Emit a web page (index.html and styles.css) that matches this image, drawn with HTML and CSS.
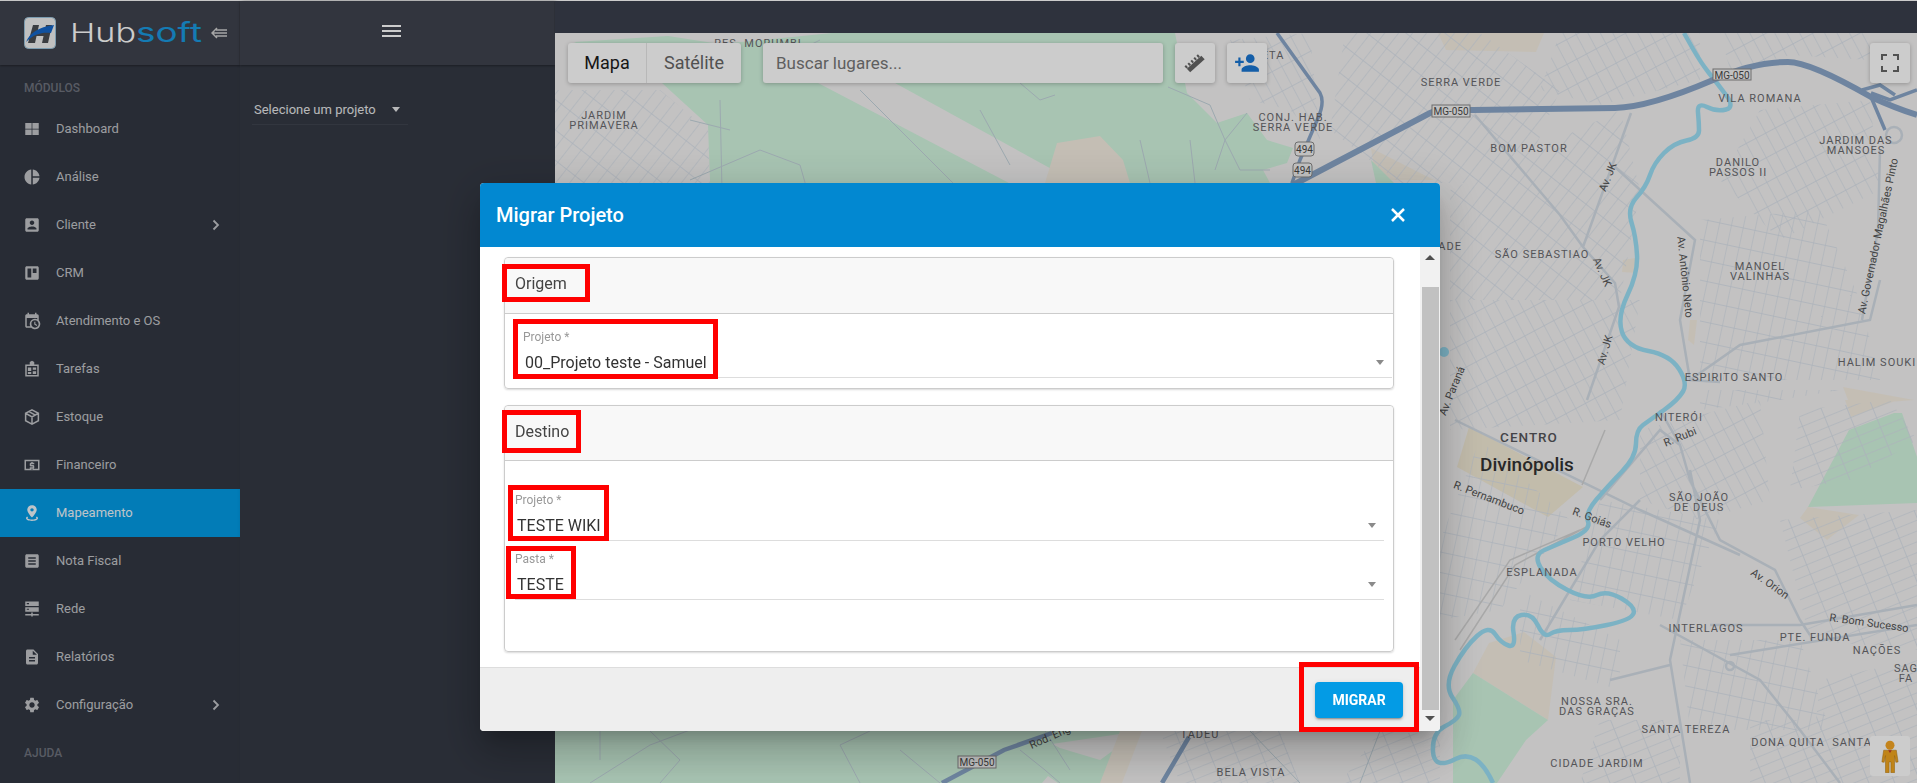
FILE: index.html
```html
<!DOCTYPE html>
<html lang="pt-BR">
<head>
  <meta charset="UTF-8">
  <title>Hubsoft - Mapeamento</title>
  <link rel="stylesheet" href="styles.css">
</head>
<body>
  <div class="app">
    <aside class="sidebar">
      <div class="brand">
        <svg class="brand-mark" viewBox="0 0 32 32">
          <rect x=".5" y=".5" width="31" height="31" rx="4" fill="#f0f0f0" stroke="#9cc4dc"/>
          <path d="M9 8h6l-4 18H4zM22 8h6l-4 18h-6zM11 14h13l-1 5H10z" fill="#4a4d52"/>
          <path d="M2 25C6 16 14 10 30 8l-3 8c-9-1-17 1-25 9z" fill="#1466c8"/>
        </svg>
        <svg class="brand-name" viewBox="0 0 134 32">
          <text class="brand-hub" x="0" y="25" textLength="66" lengthAdjust="spacingAndGlyphs">Hub</text>
          <text class="brand-soft" x="66" y="25" textLength="66" lengthAdjust="spacingAndGlyphs">soft</text>
        </svg>
        <svg class="brand-fold" viewBox="0 0 16 12">
          <path d="M6 1 1 6l5 5M2 6h14M5 3h11M5 9h11" fill="none" stroke="#d0d0d0" stroke-width="1.5"/>
        </svg>
      </div>
      <div class="nav-title">Módulos</div>
      <ul class="nav">
        <li class="nav-item">
          <svg class="nav-icon" viewBox="0 0 24 24"><path d="M3 4h8.500v7.500H3zM12.500 4H21v7.500h-8.500zM3 12.500h8.500V20H3zM12.500 12.500H21V20h-8.500z"/></svg>
          Dashboard
        </li>
        <li class="nav-item">
          <svg class="nav-icon" viewBox="0 0 24 24"><path d="M11 2v20c-5.070-.5-9-4.790-9-10s3.930-9.500 9-10zm2.030 0v8.990H22c-.47-4.740-4.240-8.520-8.970-8.990zm0 11.010V22c4.740-.47 8.500-4.250 8.970-8.990h-8.970z"/></svg>
          Análise
        </li>
        <li class="nav-item">
          <svg class="nav-icon" viewBox="0 0 24 24"><path d="M3 5v14c0 1.100.89 2 2 2h14c1.100 0 2-.9 2-2V5c0-1.100-.9-2-2-2H5c-1.110 0-2 .9-2 2zm12 4c0 1.660-1.340 3-3 3s-3-1.340-3-3 1.340-3 3-3 3 1.340 3 3zm-9 8c0-2 4-3.100 6-3.100s6 1.100 6 3.100v1H6v-1z"/></svg>
          Cliente
          <svg class="nav-arrow" viewBox="0 0 8 12"><path d="M1.500 1.500 6 6l-4.500 4.500" fill="none" stroke-width="1.800"/></svg>
        </li>
        <li class="nav-item">
          <svg class="nav-icon" viewBox="0 0 24 24"><path fill-rule="evenodd" d="M19 3H5c-1.100 0-2 .9-2 2v14c0 1.100.9 2 2 2h14c1.100 0 2-.9 2-2V5c0-1.100-.9-2-2-2zm-8 15H6V6h5v12zm7-6h-5V6h5v6z"/></svg>
          CRM
        </li>
        <li class="nav-item">
          <svg class="nav-icon" viewBox="0 0 24 24"><path d="M15 13h1.500v2.820l2.440 1.410-.75 1.300L15 16.690V13m4-5H5v11h4.670A7 7 0 0 1 16 9c1.070 0 2.090.24 3 .67V8M5 21c-1.110 0-2-.9-2-2V5c0-1.110.89-2 2-2h1V1h2v2h8V1h2v2h1a2 2 0 0 1 2 2v6.100A7 7 0 0 1 16 23c-1.910 0-3.640-.76-4.900-2H5m11-9.850A4.850 4.850 0 0 0 11.150 16c0 2.680 2.170 4.850 4.850 4.850s4.850-2.170 4.850-4.850-2.170-4.850-4.850-4.850z"/></svg>
          Atendimento e OS
        </li>
        <li class="nav-item">
          <svg class="nav-icon" viewBox="0 0 24 24"><path fill-rule="evenodd" d="M9 6V2.500L12 1l3 1.500V6h6v16H3V6zM5 8v12h14V8zm1.500 2H11v4.500H6.500zM13 10h4.500v3H13zm-6.500 6H11v2.500H6.500zM13 15h4.500v3.500H13z"/></svg>
          Tarefas
        </li>
        <li class="nav-item">
          <svg class="nav-icon" viewBox="0 0 24 24"><path d="M12 2.500 20.500 7v10L12 21.500 3.500 17V7zM3.500 7l8.500 5 8.500-5M12 12v9.500M8 4.800l8.500 4.800" fill="none" stroke-width="2"/></svg>
          Estoque
        </li>
        <li class="nav-item">
          <svg class="nav-icon" viewBox="0 0 24 24"><path fill-rule="evenodd" d="M2 5h20v14H2zm2 2v10h16V7zm7 1h2v1h2v2h-4v1h3l1 1v3l-1 1h-1v1h-2v-1H9v-2h4v-1h-3l-1-1v-3l1-1h1z"/></svg>
          Financeiro
        </li>
        <li class="nav-item is-active">
          <svg class="nav-icon" viewBox="0 0 24 24"><path fill-rule="evenodd" d="M12 1.500c-3.600 0-6.300 2.700-6.300 6.200 0 4.300 6.300 10.300 6.300 10.300s6.300-6 6.300-10.300c0-3.500-2.700-6.200-6.300-6.200zm0 4a2.300 2.300 0 1 1 0 4.600 2.300 2.300 0 0 1 0-4.600z"/><path d="M5.500 16.500c-1 .7-1.500 1.500-1.500 2.500 0 2 3.500 3.500 8 3.500s8-1.500 8-3.500c0-1-.5-1.800-1.500-2.500l-1.300 1.400c.5.300.8.700.8 1.100 0 .8-2.500 1.700-6 1.700s-6-.9-6-1.700c0-.4.300-.8.800-1.100z"/></svg>
          Mapeamento
        </li>
        <li class="nav-item">
          <svg class="nav-icon" viewBox="0 0 24 24"><path d="M19 3H5c-1.100 0-2 .9-2 2v14c0 1.100.9 2 2 2h14c1.100 0 2-.9 2-2V5c0-1.100-.9-2-2-2zm-2 14H7v-2h10v2zm0-4H7v-2h10v2zm0-4H7V7h10v2z"/></svg>
          Nota Fiscal
        </li>
        <li class="nav-item">
          <svg class="nav-icon" viewBox="0 0 24 24"><path fill-rule="evenodd" d="M3 2h18v6H3zm2 2v1.500h3V4zM3 9.500h18v6H3zm2 2V13h3v-1.500zM11 16.500h2v2h8v2h-8V22h-2v-1.500H3v-2h8z"/></svg>
          Rede
        </li>
        <li class="nav-item">
          <svg class="nav-icon" viewBox="0 0 24 24"><path d="M14 2H6c-1.100 0-1.990.9-1.990 2L4 20c0 1.100.89 2 1.990 2H18c1.100 0 2-.9 2-2V8l-6-6zm2 16H8v-2h8v2zm0-4H8v-2h8v2zm-3-5V3.500L18.500 9H13z"/></svg>
          Relatórios
        </li>
        <li class="nav-item">
          <svg class="nav-icon" viewBox="0 0 24 24"><path d="M19.140 12.940c.04-.3.06-.61.06-.94 0-.32-.02-.64-.07-.94l2.030-1.580a.49.49 0 0 0 .12-.61l-1.920-3.320a.488.488 0 0 0-.59-.22l-2.390.96c-.5-.38-1.030-.7-1.620-.94l-.36-2.540a.484.484 0 0 0-.48-.41h-3.840c-.24 0-.43.17-.47.41l-.36 2.540c-.59.24-1.130.57-1.620.94l-2.390-.96c-.22-.08-.47 0-.59.22L2.740 8.870c-.12.21-.08.47.12.61l2.030 1.580c-.05.3-.09.63-.09.94s.02.64.07.94l-2.030 1.580a.49.49 0 0 0-.12.61l1.920 3.320c.12.22.37.29.59.22l2.390-.96c.5.38 1.030.7 1.620.94l.36 2.540c.05.24.24.41.48.41h3.840c.24 0 .44-.17.47-.41l.36-2.540c.59-.24 1.130-.56 1.620-.94l2.390.96c.22.08.47 0 .59-.22l1.920-3.320c.12-.22.07-.47-.12-.61l-2.010-1.580zM12 15.600c-1.980 0-3.600-1.620-3.600-3.600s1.620-3.600 3.600-3.600 3.600 1.620 3.600 3.600-1.620 3.600-3.600 3.600z"/></svg>
          Configuração
          <svg class="nav-arrow" viewBox="0 0 8 12"><path d="M1.500 1.500 6 6l-4.500 4.500" fill="none" stroke-width="1.800"/></svg>
        </li>
      </ul>
      <div class="nav-title nav-title-help">Ajuda</div>
    </aside>

    <section class="panel">
      <div class="panel-head">
        <span class="burger"></span>
      </div>
      <div class="project-select">
        <span>Selecione um projeto</span>
        <span class="caret caret-light"></span>
      </div>
    </section>

    <main class="main">
      <div class="topbar"></div>
      <div class="map">
        <svg class="map-canvas" viewBox="555 33 1362 750">
          <defs>
            <pattern id="gridA" width="11" height="24" patternUnits="userSpaceOnUse" patternTransform="rotate(38)"><path class="st" d="M0 0H11M0 0V24"/></pattern>
            <pattern id="gridB" width="11" height="22" patternUnits="userSpaceOnUse" patternTransform="rotate(-28)"><path class="st" d="M0 0H11M0 0V22"/></pattern>
            <pattern id="gridC" width="12" height="20" patternUnits="userSpaceOnUse" patternTransform="rotate(12)"><path class="st" d="M0 0H12M0 0V20"/></pattern>
            <pattern id="gridD" width="10" height="24" patternUnits="userSpaceOnUse" patternTransform="rotate(68)"><path class="st" d="M0 0H10M0 0V24"/></pattern>
          </defs>

          <rect x="555" y="33" width="1362" height="750" class="land"/>

          <!-- parques e areas -->
          <path class="park" d="M574 42 668 36 720 44 832 33H1175L1187 93 1217 123 1247 113 1267 140 1293 148 1287 163 1263 170 1270 183 1320 200V731H1125L1105 783H555V731L710 700V180L708 125 662 83z"/>
          <path class="land" d="M818 83H895L1077 183H1009zM1052 744 1140 731 1100 760 1060 748zM1042 783 1048 776 1058 783z"/>
          <path class="tan" d="M1057 143 1100 136 1123 160 1130 183H1045zM1438 33H1544L1536 52 1446 50zM1371 148 1434 180H1390L1375 175zM1623 260 1635 258 1637 273 1622 272zM1843 387 1914 400 1850 405zM1845 400H1898L1851 417zM1808 507 1800 518 1827 540 1859 515zM1489 643 1524 632 1556 657 1548 720 1473 673zM1120 731H1142L1122 783H1100zM1690 320H1697L1694 345 1688 340z"/>
          <path class="park" d="M1849 430 1894 413H1902L1917 457V503L1808 507zM1473 673 1548 720 1526 740 1497 783H1453V700zM1371 160 1394 183H1376z"/>
          <path class="town" d="M1469 427 1583 487 1548 517 1457 467z"/>

          <!-- ruas -->
          <path fill="url(#gridA)" d="M555 90H660L708 130 710 183H555zM1345 33H1480L1560 90 1520 183H1400L1330 130zM1450 190 1620 110 1640 190 1620 300H1450z"/>
          <path fill="url(#gridB)" d="M1230 40 1310 33 1320 140 1290 110 1250 100zM1560 33H1700V80L1600 105 1540 90zM1760 110 1870 100 1880 190 1780 240 1720 180zM1450 300H1640L1620 420 1450 430zM1640 430 1760 400 1770 500 1700 520 1640 500zM1720 33H1870V60L1790 55 1730 70z"/>
          <path fill="url(#gridC)" d="M1700 220 1820 210 1860 300 1880 380H1700zM1600 500 1720 520 1680 620 1570 600zM1520 590 1620 640V690L1520 660zM1680 640H1800L1830 730H1690zM1440 540 1480 440 1570 520 1500 610 1440 620zM1700 390H1840L1780 400 1700 410z"/>
          <path fill="url(#gridD)" d="M1800 410 1890 400 1917 440 1850 480 1790 490zM1780 520 1917 510V650L1810 640zM1820 680 1917 660V783H1810zM1440 735V783H1340L1380 731zM1160 731H1280L1300 783H1180zM1600 720H1680V783H1580zM1750 720H1860V783H1750z"/>

          <!-- corregos no parque -->
          <path class="creek" d="M690 120 730 130M720 100 722 190M820 40 780 60M690 180 760 150 800 165 810 200M860 90 960 190M980 110 1010 165M1020 83 1040 100 1055 95M1168 87 1210 105 1225 140 1240 170 1270 170M1247 113 1225 140M1225 140 1215 170M1190 140 1195 183M1140 140 1150 183"/>
          <path class="creek" d="M590 783 650 745 690 730M600 731V760M650 731 680 760 660 783M870 731 840 745 860 783M900 750 940 783M1045 731 1070 770M1020 750 1045 770 1060 783M1250 731 1300 783M1380 731 1360 783"/>

          <!-- avenidas -->
          <path class="avenue" d="M1631 113 1583 247 1615 283 1619 307 1587 400M1615 167 1695 240 1680 320 1690 380 1720 382M1475 115 1560 215 1583 247M1690 380 1740 345 1870 320 1880 280M1455 420 1640 510 1740 555M1660 410 1680 445 1690 480 1720 540 1775 570 1800 620 1810 635M1710 625 1800 625 1917 605M1730 655 1917 625M1690 470 1700 520 1670 660 1690 783M1660 625 1760 680 1800 730 1840 783M1600 500 1660 430 1680 445M1880 150 1878 230 1862 320M1540 640 1600 540 1640 500M1610 680 1670 665"/>
          <path class="rail" d="M1455 640 1510 560 1580 530M1460 650 1515 565 1590 525M1582 485 1605 430"/>
          <path class="avenue-dark" d="M1162 783 1189 737M942 783 1004 750 1052 733"/>

          <!-- rio -->
          <path class="river" d="M1684 33L1692.500 48Q1701 63 1709 73Q1717 83 1726 95Q1735 107 1726 109.500Q1717 112 1707 107Q1697 102 1698 112.500Q1699 123 1699 130.500Q1699 138 1686.500 140.500Q1674 143 1664 153Q1654 163 1650 175Q1646 187 1636.500 197.500Q1627 208 1631.500 222.500Q1636 237 1637 255Q1638 273 1627.500 295Q1617 317 1622 332Q1627 347 1648.500 351Q1670 355 1679 369Q1688 383 1683 391.500Q1678 400 1664 410Q1650 420 1643 425Q1636 430 1636 443.500Q1636 457 1621.500 472Q1607 487 1596 500Q1585 513 1588 521.500Q1591 530 1573.500 537.500Q1556 545 1544.500 550Q1533 555 1540.500 567.500Q1548 580 1567.500 590Q1587 600 1597 595Q1607 590 1621.500 598.500Q1636 607 1633.500 613.500Q1631 620 1607 625Q1583 630 1569.500 630Q1556 630 1550 634Q1544 638 1538 625.500Q1532 613 1521.500 615Q1511 617 1513.500 632.500Q1516 648 1508.500 645.500Q1501 643 1495 634Q1489 625 1477 636Q1465 647 1454.500 666Q1444 685 1452.500 697.500Q1461 710 1459 715Q1457 720 1444.500 726.500Q1432 733 1433 751.500Q1434 770 1455.500 759Q1477 748 1493 783"/>
          <circle class="lake" cx="1444" cy="352" r="5"/>

          <!-- rodovias -->
          <path class="highway" d="M1270 197 1430 113Q1440 109 1473 110L1615 108Q1650 107 1713 80Q1753 62 1788 62Q1810 62 1871 97Q1895 108 1917 115"/>
          <path class="highway-thin" d="M1277 33 1320 93Q1325 102 1318 118L1300 160 1292 183M1871 93 1890 100 1917 90M1862 90 1880 85 1895 95M1871 97 1885 130"/>
          <circle class="ring" cx="1894" cy="135" r="8"/>
          <circle class="ring" cx="1730" cy="666" r="4"/>

          <!-- escudos -->
          <g class="shield"><rect x="1432" y="105" width="38" height="12"/><text x="1451" y="111.500">MG-050</text></g>
          <g class="shield"><rect x="1713" y="69" width="38" height="11"/><text x="1732" y="75">MG-050</text></g>
          <g class="shield"><rect x="958" y="756" width="38" height="12"/><text x="977" y="762.500">MG-050</text></g>
          <g class="shield"><rect x="1295" y="142" width="19" height="14" rx="3"/><text x="1304.500" y="149.500">494</text></g>
          <g class="shield"><rect x="1293" y="163" width="19" height="14" rx="3"/><text x="1302.500" y="170.500">494</text></g>

          <!-- bairros -->
          <g class="place">
            <text x="758" y="43">RES. MORUMBI</text>
            <text x="604" y="115">JARDIM</text>
            <text x="604" y="125">PRIMAVERA</text>
            <text x="1273" y="55">ETA</text>
            <text x="1293" y="117">CONJ. HAB.</text>
            <text x="1293" y="127">SERRA VERDE</text>
            <text x="1461" y="82">SERRA VERDE</text>
            <text x="1760" y="98">VILA ROMANA</text>
            <text x="1529" y="148">BOM PASTOR</text>
            <text x="1856" y="140">JARDIM DAS</text>
            <text x="1856" y="150">MANSOES</text>
            <text x="1738" y="162">DANILO</text>
            <text x="1738" y="172">PASSOS II</text>
            <text x="1760" y="266">MANOEL</text>
            <text x="1760" y="276">VALINHAS</text>
            <text x="1542" y="254">SÃO SEBASTIAO</text>
            <text x="1440" y="246">CIDADE</text>
            <text x="1734" y="377">ESPIRITO SANTO</text>
            <text x="1877" y="362">HALIM SOUKI</text>
            <text x="1679" y="417">NITERÓI</text>
            <text x="1699" y="497">SÃO JOÃO</text>
            <text x="1699" y="507">DE DEUS</text>
            <text x="1624" y="542">PORTO VELHO</text>
            <text x="1542" y="572">ESPLANADA</text>
            <text x="1706" y="628">INTERLAGOS</text>
            <text x="1815" y="637">PTE. FUNDA</text>
            <text x="1877" y="650">NAÇÕES</text>
            <text x="1906" y="668">SAG</text>
            <text x="1906" y="678">FA</text>
            <text x="1597" y="701">NOSSA SRA.</text>
            <text x="1597" y="711">DAS GRAÇAS</text>
            <text x="1686" y="729">SANTA TEREZA</text>
            <text x="1788" y="742">DONA QUITA</text>
            <text x="1852" y="742">SANTA</text>
            <text x="1597" y="763">CIDADE JARDIM</text>
            <text x="1200" y="734">TADEU</text>
            <text x="1251" y="772">BELA VISTA</text>
          </g>
          <text class="place-big" x="1529" y="437">CENTRO</text>
          <text class="city" x="1527" y="464">Divinópolis</text>

          <!-- nomes de rua -->
          <g class="street-name">
            <text x="1608" y="177" transform="rotate(-68 1608 177)">Av. JK</text>
            <text x="1602" y="272" transform="rotate(66 1602 272)">Av. JK</text>
            <text x="1605" y="350" transform="rotate(-74 1605 350)">Av. JK</text>
            <text x="1878" y="236" transform="rotate(-78 1878 236)">Av. Governador Magalhães Pinto</text>
            <text x="1685" y="277" transform="rotate(84 1685 277)">Av. Antônio Neto</text>
            <text x="1452" y="391" transform="rotate(-68 1452 391)">Av. Paraná</text>
            <text x="1680" y="437" transform="rotate(-22 1680 437)">R. Rubi</text>
            <text x="1489" y="498" transform="rotate(21 1489 498)">R. Pernambuco</text>
            <text x="1592" y="518" transform="rotate(20 1592 518)">R. Goiás</text>
            <text x="1770" y="584" transform="rotate(35 1770 584)">Av. Orion</text>
            <text x="1869" y="623" transform="rotate(8 1869 623)">R. Bom Sucesso</text>
            <text x="1050" y="737" transform="rotate(-24 1050 737)">Rod. Eng</text>
          </g>
        </svg>

        <div class="map-tools">
          <div class="map-type">
            <span class="map-type-on">Mapa</span>
            <span class="map-type-off">Satélite</span>
          </div>
          <div class="map-search">Buscar lugares...</div>
          <button class="map-btn">
            <svg class="ruler" viewBox="0 0 24 24">
              <path d="M5.500 19.500 20 6.500" fill="none" stroke="#666" stroke-width="5"/>
              <path d="M2.500 16.500 17 3.500" fill="none" stroke="#666" stroke-width="3" stroke-dasharray="2 2"/>
            </svg>
          </button>
          <button class="map-btn">
            <svg class="person-add" viewBox="0 0 24 24"><path d="M15 12c2.210 0 4-1.790 4-4s-1.790-4-4-4-4 1.790-4 4 1.790 4 4 4zm-9-2V7H4v3H1v2h3v3h2v-3h3v-2H6zm9 4c-2.670 0-8 1.340-8 4v2h16v-2c0-2.660-5.330-4-8-4z"/></svg>
          </button>
          <button class="map-btn map-btn-end">
            <svg class="expand" viewBox="0 0 18 18"><path d="M1 6V1h5M12 1h5v5M17 12v5h-5M6 17H1v-5" fill="none" stroke="#666" stroke-width="2"/></svg>
          </button>
        </div>

        <div class="pegman">
          <svg viewBox="0 0 20 36">
            <circle cx="10" cy="5.500" r="5" fill="#f5a623"/>
            <path d="M3 11h14l2 13-2.500.5L15 17v19h-4V24H9v12H5V17l-1.500 7.500L1 24z" fill="#f0a51e" stroke="#b97a10" stroke-width=".6"/>
            <path d="M8 11l2 3 2-3z" fill="#c0392b"/>
          </svg>
        </div>
      </div>
    </main>
  </div>

  <div class="backdrop"></div>

  <div class="modal">
    <header class="modal-head">
      <h2 class="modal-title">Migrar Projeto</h2>
      <svg class="modal-close" viewBox="0 0 14 14"><path d="M1 1l12 12M13 1 1 13" fill="none" stroke="#fff" stroke-width="2.500"/></svg>
    </header>
    <div class="modal-scroll">
      <div class="modal-content">
        <form class="modal-form">
          <div class="card card-origem">
            <div class="card-head">Origem</div>
            <div class="card-body">
              <div class="field">
                <label class="field-label">Projeto *</label>
                <div class="field-value">00_Projeto teste - Samuel</div>
                <span class="caret"></span>
              </div>
            </div>
          </div>
          <div class="card card-destino">
            <div class="card-head">Destino</div>
            <div class="card-body">
              <div class="field">
                <label class="field-label">Projeto *</label>
                <div class="field-value">TESTE WIKI</div>
                <span class="caret"></span>
              </div>
              <div class="field">
                <label class="field-label">Pasta *</label>
                <div class="field-value">TESTE</div>
                <span class="caret"></span>
              </div>
            </div>
          </div>
        </form>
        <footer class="modal-foot">
          <button class="btn-migrar" type="button">MIGRAR</button>
        </footer>
      </div>
      <div class="scrollbar">
        <span class="scroll-up"></span>
        <span class="scroll-thumb"></span>
        <span class="scroll-down"></span>
      </div>
    </div>

    <!-- marcacoes em vermelho do print -->
    <span class="mark mark-origem"></span>
    <span class="mark mark-projeto"></span>
    <span class="mark mark-destino"></span>
    <span class="mark mark-projeto2"></span>
    <span class="mark mark-pasta"></span>
    <span class="mark mark-migrar"></span>
  </div>
</body>
</html>
```

FILE: styles.css
```css
* {
  box-sizing: border-box;
}

html,
body {
  margin: 0;
  height: 100%;
  overflow: hidden;
}

body {
  font-family: Roboto, "Liberation Sans", sans-serif;
  background-color: #fff;
}

.app {
  display: flex;
  height: 100vh;
  padding-top: 1px;
  background-color: #fff;
}

/* menu lateral */
.sidebar {
  width: 240px;
  flex-shrink: 0;
  background-color: #333843;
  color: #c3c5c9;
}

.brand {
  display: flex;
  align-items: center;
  height: 64px;
  padding-left: 24px;
  background-color: #3f434e;
  box-shadow: 0 1px 2px rgba(0, 0, 0, 0.35);
  position: relative;
}

.brand-mark {
  width: 32px;
  height: 32px;
}

.brand-name {
  width: 134px;
  height: 32px;
  margin-left: 14px;
}

.brand-hub,
.brand-soft {
  font-family: Inter, sans-serif;
  font-size: 26px;
  font-weight: 300;
}

.brand-hub {
  fill: #fff;
}

.brand-soft {
  fill: #1a9ae0;
  font-weight: 400;
}

.brand-fold {
  width: 16px;
  height: 12px;
  margin-left: 7px;
}

.nav-title {
  height: 40px;
  padding: 16px 24px 0;
  font-size: 12px;
  line-height: 14px;
  font-weight: 500;
  color: #6e727d;
  text-transform: uppercase;
}

.nav-title-help {
  height: 48px;
  padding-top: 17px;
}

.nav {
  list-style: none;
  margin: 0;
  padding: 0;
}

.nav-item {
  display: flex;
  align-items: center;
  height: 48px;
  padding-left: 23px;
  padding-bottom: 1px;
  font-size: 13px;
}

.nav-item.is-active {
  background-color: #039be5;
  color: #eef6fb;
}

.nav-icon {
  width: 18px;
  height: 18px;
  margin-right: 15px;
  fill: currentColor;
  stroke: currentColor;
  stroke-width: 0;
}

.nav-arrow {
  width: 8px;
  height: 12px;
  margin-left: auto;
  margin-right: 20px;
  stroke: currentColor;
}

/* painel de projetos */
.panel {
  width: 315px;
  flex-shrink: 0;
  background-color: #343944;
  box-shadow: 2px 0 4px rgba(0, 0, 0, 0.25);
  position: relative;
}

.panel-head {
  display: flex;
  align-items: center;
  justify-content: center;
  height: 64px;
  padding: 0 12px 5px 0;
  background-color: #3f434e;
  box-shadow: 0 1px 2px rgba(0, 0, 0, 0.35);
}

.burger {
  width: 19px;
  height: 12px;
  border-top: 2px solid #fff;
  border-bottom: 2px solid #fff;
  position: relative;
}

.burger::after {
  content: "";
  position: absolute;
  left: 0;
  right: 0;
  top: 3px;
  height: 2px;
  background-color: #fff;
}

.project-select {
  display: flex;
  align-items: center;
  justify-content: space-between;
  width: 156px;
  height: 30px;
  margin: 30px 0 0 12px;
  padding: 0 8px 0 2px;
  border-bottom: 1px solid #3f444f;
  font-size: 13px;
  color: #e6e7e9;
}

.caret {
  width: 0;
  height: 0;
  border-left: 4.5px solid transparent;
  border-right: 4.5px solid transparent;
  border-top: 5px solid #8a8a8a;
}

.caret-light {
  border-top-color: #e6e7e9;
}

/* mapa */
.main {
  flex: 1;
  display: flex;
  flex-direction: column;
  min-width: 0;
}

.topbar {
  height: 32px;
  flex-shrink: 0;
  background-color: #3a3f4d;
  box-shadow: 0 1px 1px rgba(0, 0, 0, 0.5);
  position: relative;
}

.map {
  flex: 1;
  position: relative;
  overflow: hidden;
}

.map-canvas {
  position: absolute;
  left: 0;
  top: 0;
  width: 1362px;
  height: 750px;
}

.land {
  fill: #f4f3f3;
}

.park {
  fill: #d2f5df;
}

.tan {
  fill: #f5eee2;
}

.town {
  fill: #f3ebd6;
}

.st {
  fill: none;
  stroke: #d8e0ea;
  stroke-width: 1.3;
}

.creek {
  fill: none;
  stroke: #c4d4dc;
  stroke-width: 1;
}

.avenue {
  fill: none;
  stroke: #d4dce5;
  stroke-width: 2.5;
}

.rail {
  fill: none;
  stroke: #d3d3d3;
  stroke-width: 1.5;
}

.avenue-dark,
.highway-thin {
  fill: none;
  stroke: #8aa6c8;
  stroke-width: 3.5;
}

.avenue-dark {
  stroke-width: 4.5;
}

.highway {
  fill: none;
  stroke: #8aa6c8;
  stroke-width: 6;
}

.ring {
  fill: none;
  stroke: #d4dce5;
  stroke-width: 2.5;
}

.river {
  fill: none;
  stroke: #9cdff5;
  stroke-width: 4.5;
  stroke-linejoin: round;
}

.lake {
  fill: #9cdff5;
}

.shield rect {
  fill: #f2f2f2;
  stroke: #888;
  stroke-width: 1;
}

.shield text {
  font-size: 10px;
  fill: #4a4a4a;
  text-anchor: middle;
  dominant-baseline: central;
}

.place text,
.place-big {
  font-size: 11px;
  letter-spacing: 1px;
  fill: #6a6a6e;
  text-anchor: middle;
  dominant-baseline: central;
}

.place-big {
  font-size: 13.5px;
  font-weight: 500;
  fill: #55555a;
}

.city {
  font-size: 19px;
  font-weight: 500;
  fill: #333;
  text-anchor: middle;
  dominant-baseline: central;
}

.street-name text {
  font-size: 11px;
  fill: #555;
  text-anchor: middle;
  dominant-baseline: central;
}

.map-tools {
  display: flex;
  gap: 12px;
  padding: 10px 7px 0 13px;
  position: relative;
}

.map-type,
.map-search,
.map-btn {
  height: 40px;
  background-color: #fff;
  border: 0;
  border-radius: 3px;
  box-shadow: 0 1px 4px rgba(0, 0, 0, 0.25);
}

.map-type {
  display: flex;
  width: 173px;
  margin-right: 10px;
  font-size: 18px;
  line-height: 40px;
  text-align: center;
}

.map-type-on {
  width: 79px;
  color: #1c1c1c;
  border-right: 1px solid #e6e6e6;
}

.map-type-off {
  flex: 1;
  color: #666;
}

.map-search {
  width: 400px;
  padding-left: 13px;
  font-size: 17px;
  line-height: 40px;
  color: #777;
}

.map-btn {
  display: flex;
  align-items: center;
  justify-content: center;
  width: 40px;
  padding: 0;
}

.map-btn-end {
  margin-left: auto;
}

.ruler {
  width: 24px;
  height: 24px;
}

.person-add {
  width: 26px;
  height: 26px;
  fill: #1976d2;
}

.expand {
  width: 18px;
  height: 18px;
}

.pegman {
  display: flex;
  align-items: center;
  justify-content: center;
  position: absolute;
  right: 7px;
  bottom: 7px;
  width: 40px;
  height: 40px;
  background-color: #fff;
  border-radius: 3px;
}

.pegman svg {
  width: 18px;
  height: 33px;
}

/* modal */
.backdrop {
  position: fixed;
  inset: 0;
  background-color: rgba(0, 0, 0, 0.2);
}

.modal {
  position: fixed;
  left: 480px;
  top: 183px;
  display: flex;
  flex-direction: column;
  width: 960px;
  height: 548px;
  background-color: #fff;
  border-radius: 4px;
  box-shadow: 0 11px 15px -7px rgba(0, 0, 0, 0.2), 0 24px 38px 3px rgba(0, 0, 0, 0.14), 0 9px 46px 8px rgba(0, 0, 0, 0.12);
}

.modal-head {
  display: flex;
  align-items: center;
  justify-content: space-between;
  height: 64px;
  flex-shrink: 0;
  padding: 0 35px 0 16px;
  background-color: #0288d1;
  border-radius: 4px 4px 0 0;
}

.modal-title {
  margin: 0;
  font-size: 20px;
  font-weight: 500;
  color: #fff;
}

.modal-close {
  width: 14px;
  height: 14px;
}

.modal-scroll {
  display: flex;
  flex: 1;
  min-height: 0;
}

.modal-content {
  display: flex;
  flex-direction: column;
  flex: 1;
  min-width: 0;
}

.modal-form {
  flex: 1;
  padding: 10px 26px 0 24px;
}

.card {
  border-radius: 4px;
  border: 1px solid #ccc;
  box-shadow: 0 1px 2px rgba(0, 0, 0, 0.15);
}

.card-origem {
  height: 132px;
}

.card-destino {
  height: 247px;
  margin-top: 16px;
}

.card-head {
  height: 56px;
  padding-left: 10px;
  font-size: 16px;
  line-height: 52px;
  color: #444;
  background-color: #f8f8f8;
  border-bottom: 1px solid #ccc;
  border-radius: 4px 4px 0 0;
}

.card-destino .card-head {
  height: 55px;
}

.card-origem .card-body {
  padding: 11px 1px 0 17px;
}

.card-destino .card-body {
  display: flex;
  flex-direction: column;
  gap: 6px;
  padding: 27px 9px 0 10px;
}

.field {
  position: relative;
  height: 53px;
  padding-top: 5px;
  border-bottom: 1px solid #ddd;
}

.field-label {
  display: block;
  height: 14px;
  font-size: 12px;
  line-height: 14px;
  color: #999;
}

.card-origem .field-label {
  margin-left: 1px;
}

.card-origem .field-value {
  margin-left: 3px;
}

.field-value {
  margin-top: 9px;
  margin-left: 2px;
  font-size: 16px;
  line-height: 20px;
  color: #333;
}

.field .caret {
  position: absolute;
  right: 8px;
  top: 35px;
}

.modal-foot {
  display: flex;
  align-items: center;
  justify-content: flex-end;
  height: 64px;
  flex-shrink: 0;
  padding-right: 17px;
  background-color: #eee;
  border-top: 1px solid #ddd;
  border-bottom-left-radius: 4px;
}

.btn-migrar {
  width: 88px;
  height: 36px;
  border: 0;
  border-radius: 4px;
  background-color: #039be5;
  color: #fff;
  font-family: inherit;
  font-size: 14px;
  font-weight: 700;
  box-shadow: 0 3px 1px -2px rgba(0, 0, 0, 0.2), 0 2px 2px 0 rgba(0, 0, 0, 0.14), 0 1px 5px 0 rgba(0, 0, 0, 0.12);
}

.scrollbar {
  display: flex;
  flex-direction: column;
  align-items: center;
  width: 20px;
  flex-shrink: 0;
  background-color: #f1f1f1;
  border-bottom-right-radius: 4px;
}

.scroll-up,
.scroll-down {
  width: 0;
  height: 0;
  border-left: 5px solid transparent;
  border-right: 5px solid transparent;
}

.scroll-up {
  margin-top: 8px;
  border-bottom: 5px solid #505050;
}

.scroll-down {
  margin-top: 6px;
  border-top: 5px solid #505050;
}

.scroll-thumb {
  width: 17px;
  height: 423px;
  margin-top: 27px;
  background-color: #c1c1c1;
}

.mark {
  position: absolute;
  border: 5px solid #f00;
}

.mark-origem {
  left: 22px;
  top: 81px;
  width: 88px;
  height: 38px;
}

.mark-projeto {
  left: 33px;
  top: 136px;
  width: 205px;
  height: 60px;
}

.mark-destino {
  left: 22px;
  top: 227px;
  width: 79px;
  height: 43px;
}

.mark-projeto2 {
  left: 28px;
  top: 302px;
  width: 101px;
  height: 56px;
}

.mark-pasta {
  left: 26px;
  top: 363px;
  width: 70px;
  height: 53px;
}

.mark-migrar {
  left: 819px;
  top: 479px;
  width: 120px;
  height: 70px;
}
```
